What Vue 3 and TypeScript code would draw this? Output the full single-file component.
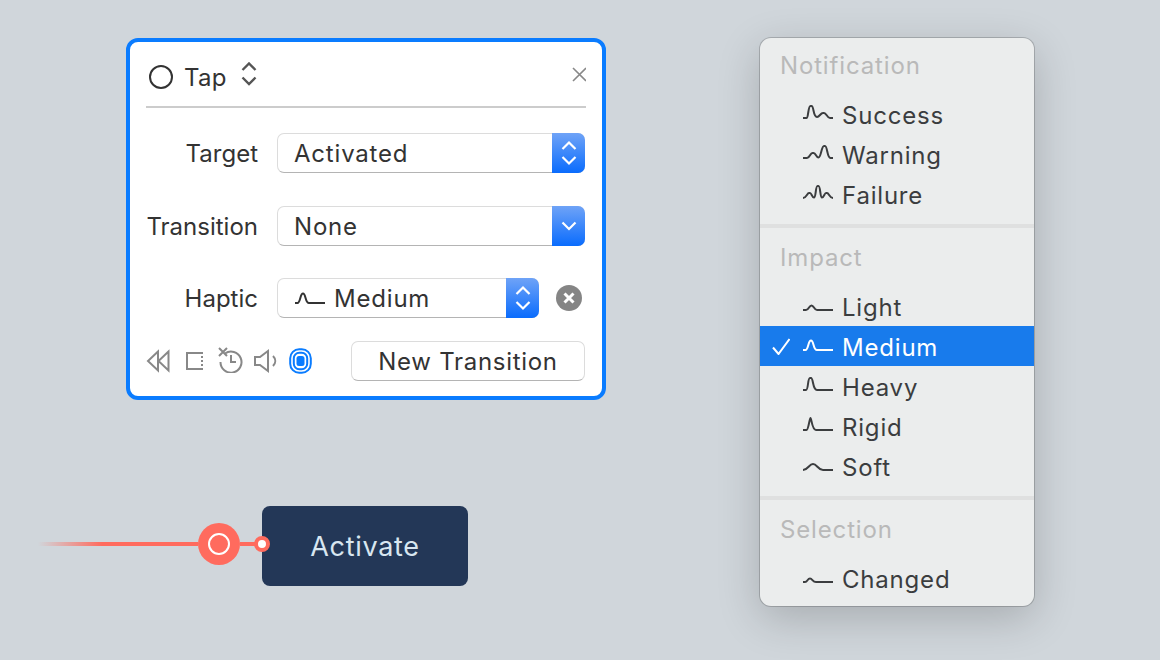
<script setup lang="ts">
interface HapticItem {
  label: string;
  wave: string;
  selected?: boolean;
}

interface HapticGroup {
  title: string;
  items: HapticItem[];
}

const waves: Record<string, string> = {
  success: "M0 13H3.5C5.5 13 5 1 7.5 1H8.5C11 1 10 12 14 12C16.5 12 17.5 8 20 8H21C23.5 8 24 13 27 13H30",
  warning: "M0 13H4C7 13 7 8 9.5 8H10.5C13 8 13 12.5 15.5 12.5C18 12.5 18.5 1 21 1H22C24.5 1 24 13 27.5 13H30",
  failure: "M0 13C3.5 13 4 8 6 8H7C8.5 8 9 12.5 11 12.5C13 12.5 12.5 1 14.5 1H15.5C17.5 1 17 12.5 19 12.5C21 12.5 21.5 8 23 8H24C26 8 26.5 13 30 13",
  light: "M0 13H3C6 13 6 8.5 8.5 8.5C11 8.5 11 13 14 13H30",
  medium: "M0 13H2.5C5.5 13 5 3.5 8 3.5C11 3.5 10 13 14 13H30",
  heavy: "M0 13H3C5.5 13 4.5 1 7 1H8C10.5 1 9.5 13 14 13H30",
  rigid: "M0 13H3.5C5.5 13 6.5 1 7.5 1C8.5 1 9 13 13 13H30",
  soft: "M0 13C5 13 6 7 10 7C14 7 15 13 20 13H30",
  changed: "M0 13H2C4.5 13 4.5 9.5 7 9.5C9.5 9.5 9.5 13 13 13H30",
};

const groups: HapticGroup[] = [
  {
    title: "Notification",
    items: [
      { label: "Success", wave: waves.success },
      { label: "Warning", wave: waves.warning },
      { label: "Failure", wave: waves.failure },
    ],
  },
  {
    title: "Impact",
    items: [
      { label: "Light", wave: waves.light },
      { label: "Medium", wave: waves.medium, selected: true },
      { label: "Heavy", wave: waves.heavy },
      { label: "Rigid", wave: waves.rigid },
      { label: "Soft", wave: waves.soft },
    ],
  },
  {
    title: "Selection",
    items: [{ label: "Changed", wave: waves.changed }],
  },
];

const mediumWave = waves.medium;
</script>

<template>
  <div class="canvas">
    <div class="left">
      <section class="card">
        <header class="card-head">
          <svg class="state-ring" width="24" height="24" viewBox="0 0 24 24">
            <circle cx="12" cy="12" r="11" />
          </svg>
          <span class="card-title">Tap</span>
          <svg class="updown" width="16" height="24" viewBox="0 0 16 24">
            <path d="M1.5 8L8 1.5L14.5 8M1.5 15.5L8 22L14.5 15.5" />
          </svg>
          <svg class="close" width="16" height="16" viewBox="0 0 16 16">
            <path d="M3 2L16 15M16 2L3 15" />
          </svg>
        </header>

        <div class="field first">
          <label>Target</label>
          <div class="select">
            <span class="value">Activated</span>
            <span class="arrows">
              <svg width="16" height="26" viewBox="0 0 16 26">
                <path d="M1.5 9L8 2.5L14.5 9M1.5 17L8 23.5L14.5 17" />
              </svg>
            </span>
          </div>
        </div>

        <div class="field second">
          <label>Transition</label>
          <div class="select">
            <span class="value">None</span>
            <span class="arrows">
              <svg width="16" height="10" viewBox="0 0 16 10">
                <path d="M1.5 1.5L8 8L14.5 1.5" />
              </svg>
            </span>
          </div>
        </div>

        <div class="field third">
          <label>Haptic</label>
          <div class="select narrow">
            <svg class="wave card-wave" width="30" height="20" viewBox="0 0 30 20">
              <path :d="mediumWave" />
            </svg>
            <span class="value">Medium</span>
            <span class="arrows">
              <svg width="16" height="26" viewBox="0 0 16 26">
                <path d="M1.5 9L8 2.5L14.5 9M1.5 17L8 23.5L14.5 17" />
              </svg>
            </span>
          </div>
          <svg class="clear" width="26" height="26" viewBox="0 0 26 26">
            <circle cx="13" cy="13" r="13" />
            <path d="M8.5 8.5L17.5 17.5M17.5 8.5L8.5 17.5" />
          </svg>
        </div>

        <footer class="card-foot">
          <div class="tools">
            <svg class="tool" width="24" height="24" viewBox="0 0 24 24">
              <path d="M12 2.5L2 12L12 21.5ZM22.5 2.5L12.5 12L22.5 21.5Z" />
            </svg>
            <svg class="tool frame" width="20" height="24" viewBox="0 0 20 24">
              <path d="M17 4H3V20H17" />
              <path class="dots" d="M18 3V21" />
            </svg>
            <svg class="tool history" width="26" height="26" viewBox="0 0 26 26">
              <path d="M8 6.5A10.5 10.5 0 1 1 3.5 15" />
              <path d="M14 8V15H19" />
              <path d="M2 1L10 9M10 1L2 9" />
            </svg>
            <svg class="tool speaker" width="25" height="24" viewBox="0 0 25 24">
              <path d="M2 8H7L15 2V22L7 16H2Z" />
              <path d="M20 7C23 10 23 14 20 17" />
            </svg>
            <svg class="target" width="23" height="26" viewBox="0 0 23 26">
              <rect class="ring" x="1.2" y="1.2" width="20.6" height="23.6" rx="9" />
              <rect class="ring" x="4.8" y="4.8" width="13.4" height="16.4" rx="5.5" />
              <rect class="core" x="7.5" y="8" width="8" height="10" rx="2.5" />
            </svg>
          </div>
          <button class="new-transition" type="button">New Transition</button>
        </footer>
      </section>

      <div class="node-row">
        <div class="wire">
          <span class="fade"></span>
          <span class="pin"><span class="pin-ring"></span></span>
          <span class="stub"></span>
        </div>
        <div class="node">
          <span class="port"></span>
          Activate
        </div>
      </div>
    </div>

    <nav class="menu">
      <template v-for="(group, i) in groups" :key="group.title">
        <div v-if="i > 0" class="menu-sep"></div>
        <div class="menu-title">{{ group.title }}</div>
        <ul class="menu-list">
          <li
            v-for="item in group.items"
            :key="item.label"
            class="menu-item"
            :class="{ selected: item.selected }"
          >
            <svg v-if="item.selected" class="check" width="18" height="17" viewBox="0 0 18 17">
              <path d="M1 9.5L6.5 16L17.5 1" />
            </svg>
            <svg class="wave" width="30" height="20" viewBox="0 0 30 20">
              <path :d="item.wave" />
            </svg>
            <span>{{ item.label }}</span>
          </li>
        </ul>
      </template>
    </nav>
  </div>
</template>

<style scoped>
.canvas {
  width: 1160px;
  height: 660px;
  box-sizing: border-box;
  padding: 38px 0 0 38px;
  display: flex;
  align-items: flex-start;
  gap: 154px;
  background: #d0d6db;
  font-family: Inter, "Liberation Sans", sans-serif;
  font-size: 24px;
  color: #333;
  overflow: hidden;
}

.left {
  width: 568px;
  flex: none;
}

/* inspector card */
.card {
  width: 480px;
  margin-left: 88px;
  box-sizing: border-box;
  padding: 0 16px 15px;
  background: #fff;
  border: 4px solid #0a7cff;
  border-radius: 12px;
}

.card-head {
  height: 64px;
  display: flex;
  align-items: center;
  border-bottom: 2px solid #ccc;
}

.state-ring {
  margin-left: 3px;
  margin-top: 6px;
}

.state-ring circle {
  fill: none;
  stroke: #333;
  stroke-width: 2;
}

.card-title {
  margin-left: 11px;
  margin-top: 7px;
  letter-spacing: 0.3px;
}

.updown {
  margin-left: 14px;
  margin-bottom: 1px;
}

.updown path {
  fill: none;
  stroke: #555;
  stroke-width: 2.4;
}

.close {
  margin-left: auto;
  margin-top: -1px;
}

.close path {
  fill: none;
  stroke: #888;
  stroke-width: 1.6;
}

.field {
  display: flex;
  align-items: center;
  height: 40px;
}

.field.first {
  margin-top: 25px;
}

.field.second {
  margin-top: 33px;
}

.field.third {
  margin-top: 32px;
}

.field label {
  width: 112px;
  flex: none;
  margin-right: 19px;
  text-align: right;
}

.select {
  flex: none;
  width: 308px;
  height: 40px;
  box-sizing: border-box;
  display: flex;
  align-items: center;
  padding-left: 16px;
  background: #fff;
  border: 1px solid #dcdcdc;
  border-bottom-color: #b4b4b4;
  border-radius: 7px;
  position: relative;
  letter-spacing: 0.8px;
}

.select.narrow {
  width: 262px;
}

.arrows {
  position: absolute;
  top: -1px;
  right: -1px;
  bottom: -1px;
  width: 33px;
  display: flex;
  align-items: center;
  justify-content: center;
  background: linear-gradient(#6fa3f7, #0a6cfd);
  border-radius: 0 7px 7px 0;
}

.arrows path {
  fill: none;
  stroke: #fff;
  stroke-width: 2.2;
}

.card-wave {
  margin-left: 1px;
  margin-right: 9px;
  margin-top: 4px;
}

.clear {
  margin-left: 17px;
}

.clear circle {
  fill: #858585;
}

.clear path {
  fill: none;
  stroke: #fff;
  stroke-width: 3;
}

.card-foot {
  display: flex;
  align-items: center;
  justify-content: space-between;
  margin-top: 23px;
  padding-right: 1px;
}

.tools {
  display: flex;
  align-items: center;
  gap: 14px;
}

.frame {
  margin-right: -1px;
}

.history {
  margin-bottom: 2px;
}

.speaker {
  margin-left: -4px;
  margin-right: -3px;
}

.tool path {
  fill: none;
  stroke: #888;
  stroke-width: 2;
}

.tool .dots {
  stroke-dasharray: 2 2;
}

.target .ring {
  fill: none;
  stroke: #0a7cff;
  stroke-width: 2;
}

.target .core {
  fill: #0a7cff;
}

.new-transition {
  width: 234px;
  height: 40px;
  padding: 0;
  background: #fff;
  border: 1px solid #dcdcdc;
  border-bottom-color: #b4b4b4;
  border-radius: 7px;
  font: inherit;
  letter-spacing: 0.7px;
  color: #333;
}

/* node on the canvas */
.node-row {
  display: flex;
  align-items: flex-start;
  margin-top: 106px;
}

.wire {
  display: flex;
  align-items: center;
  margin-top: 17px;
  height: 42px;
}

.fade {
  width: 160px;
  height: 4px;
  background: linear-gradient(90deg, rgba(255, 107, 94, 0), #ff6b5e 40%);
}

.pin {
  width: 42px;
  height: 42px;
  border-radius: 50%;
  background: #ff6b5e;
  display: flex;
  align-items: center;
  justify-content: center;
}

.pin-ring {
  width: 22px;
  height: 22px;
  box-sizing: border-box;
  border: 2px solid #fff;
  border-radius: 50%;
}

.stub {
  width: 22px;
  height: 4px;
  background: #ff6b5e;
}

.node {
  width: 206px;
  height: 80px;
  display: flex;
  align-items: center;
  justify-content: center;
  padding-top: 1px;
  box-sizing: border-box;
  background: #233757;
  border-radius: 8px;
  color: #d8e6f0;
  font-size: 27px;
  letter-spacing: 0.7px;
  position: relative;
}

.port {
  position: absolute;
  left: -8px;
  top: 30px;
  width: 8px;
  height: 8px;
  border: 4px solid #ff6b5e;
  border-radius: 50%;
  background: #fff;
}

/* haptics menu */
.menu {
  width: 274px;
  height: 568px;
  box-sizing: border-box;
  flex: none;
  padding: 7px 0;
  background: #ebeded;
  border-radius: 11px;
  box-shadow: 0 0 0 1px rgba(0, 0, 0, 0.18), 0 12px 44px rgba(0, 0, 0, 0.2);
  color: #3b3d3f;
  letter-spacing: 0.8px;
}

.menu-title {
  height: 40px;
  line-height: 42px;
  padding-left: 20px;
  color: #b9b9b9;
  letter-spacing: 0.85px;
}

.menu-list {
  list-style: none;
  margin: 10px 0 9px;
  padding: 0;
}

.menu-sep {
  height: 4px;
  margin-bottom: 9px;
  background: #dfe0e0;
}

.menu-item {
  height: 40px;
  box-sizing: border-box;
  display: flex;
  align-items: center;
  padding-left: 43px;
  position: relative;
}

.menu-item span {
  margin-left: 9px;
}

.menu-item.selected {
  margin: -1px 0 1px;
  padding-top: 2px;
  background: #187bec;
  color: #fff;
}

.wave path {
  fill: none;
  stroke: currentColor;
  stroke-width: 2;
}

.check {
  position: absolute;
  left: 12px;
  top: 12px;
}

.check path {
  fill: none;
  stroke: #fff;
  stroke-width: 2;
}
</style>
